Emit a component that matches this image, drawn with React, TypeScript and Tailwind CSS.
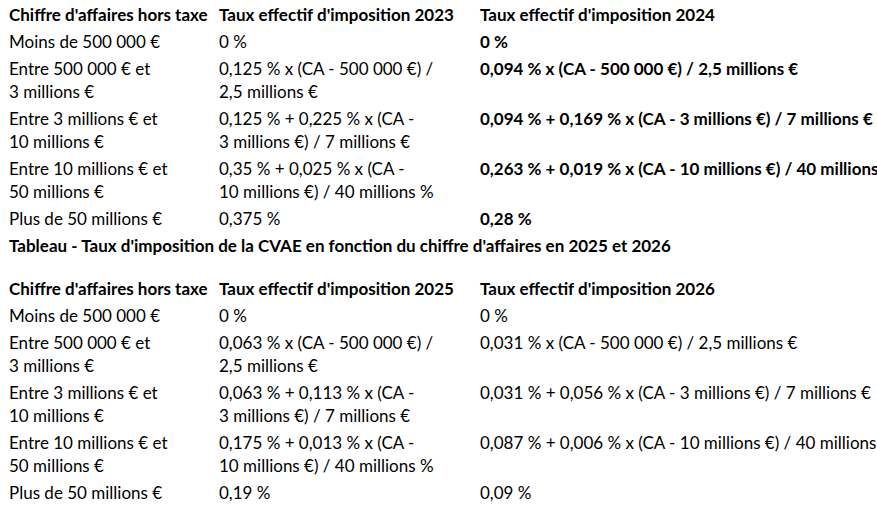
import React from "react";

type Row = { c1: string[]; c2: string[]; c3: string[] };

const table1: Row[] = [
  { c1: ["Moins de 500 000 €"], c2: ["0 %"], c3: ["0 %"] },
  {
    c1: ["Entre 500 000 € et", "3 millions €"],
    c2: ["0,125 % x (CA - 500 000 €) /", "2,5 millions €"],
    c3: ["0,094 % x (CA - 500 000 €) / 2,5 millions €"],
  },
  {
    c1: ["Entre 3 millions € et", "10 millions €"],
    c2: ["0,125 % + 0,225 % x (CA -", "3 millions €) / 7 millions €"],
    c3: ["0,094 % + 0,169 % x (CA - 3 millions €) / 7 millions €"],
  },
  {
    c1: ["Entre 10 millions € et", "50 millions €"],
    c2: ["0,35 % + 0,025 % x (CA -", "10 millions €) / 40 millions %"],
    c3: ["0,263 % + 0,019 % x (CA - 10 millions €) / 40 millions €"],
  },
  { c1: ["Plus de 50 millions €"], c2: ["0,375 %"], c3: ["0,28 %"] },
];

const table2: Row[] = [
  { c1: ["Moins de 500 000 €"], c2: ["0 %"], c3: ["0 %"] },
  {
    c1: ["Entre 500 000 € et", "3 millions €"],
    c2: ["0,063 % x (CA - 500 000 €) /", "2,5 millions €"],
    c3: ["0,031 % x (CA - 500 000 €) / 2,5 millions €"],
  },
  {
    c1: ["Entre 3 millions € et", "10 millions €"],
    c2: ["0,063 % + 0,113 % x (CA -", "3 millions €) / 7 millions €"],
    c3: ["0,031 % + 0,056 % x (CA - 3 millions €) / 7 millions €"],
  },
  {
    c1: ["Entre 10 millions € et", "50 millions €"],
    c2: ["0,175 % + 0,013 % x (CA -", "10 millions €) / 40 millions %"],
    c3: ["0,087 % + 0,006 % x (CA - 10 millions €) / 40 millions %"],
  },
  { c1: ["Plus de 50 millions €"], c2: ["0,19 %"], c3: ["0,09 %"] },
];

function Cell({ lines, bold }: { lines: string[]; bold?: boolean }) {
  return (
    <div className={`pl-[9px] py-[2px] leading-[23px] whitespace-nowrap ${bold ? "font-bold" : ""}`}>
      {lines.map((l, i) => (
        <div key={i}>{l}</div>
      ))}
    </div>
  );
}

function Table({ y1, y2, rows, bold3 }: { y1: string; y2: string; rows: Row[]; bold3?: boolean }) {
  return (
    <div className="grid grid-cols-[210px_261px_700px]">
      <Cell lines={["Chiffre d'affaires hors taxe"]} bold />
      <Cell lines={[`Taux effectif d'imposition ${y1}`]} bold />
      <Cell lines={[`Taux effectif d'imposition ${y2}`]} bold />
      {rows.map((r, i) => (
        <React.Fragment key={i}>
          <Cell lines={r.c1} />
          <Cell lines={r.c2} />
          <Cell lines={r.c3} bold={bold3} />
        </React.Fragment>
      ))}
    </div>
  );
}

export default function App() {
  return (
    <div
      className="w-[877px] h-[510px] overflow-hidden bg-white text-black text-[17px] pt-[1px]"
      style={{ fontFamily: "Lato, 'Noto Sans', sans-serif" }}
    >
      <Table y1="2023" y2="2024" rows={table1} bold3 />
      <div className="pl-[9px] py-[2px] leading-[23px] font-bold whitespace-nowrap">
        Tableau - Taux d'imposition de la CVAE en fonction du chiffre d'affaires en 2025 et 2026
      </div>
      <div className="h-[16px]" />
      <Table y1="2025" y2="2026" rows={table2} />
    </div>
  );
}
